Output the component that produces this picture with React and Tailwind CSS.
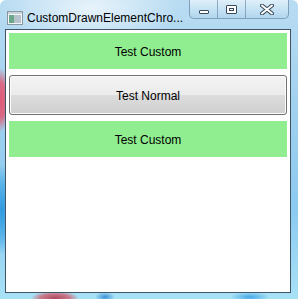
export default function App() {
  const font = { fontFamily: '"Segoe UI", "Liberation Sans", Arial, sans-serif' };
  return (
    <div
      className="w-[298px] h-[299px] overflow-hidden flex flex-col rounded-t-[6px] bg-[radial-gradient(ellipse_12px_32px_at_0px_100px,#e05a76_0%,#d86a86_55%,transparent_100%),radial-gradient(ellipse_12px_45px_at_2px_210px,#2f98e0_0%,#5ab4ea_60%,transparent_100%),radial-gradient(ellipse_24px_7px_at_55px_298px,#b04a60_0%,#c87a8c_60%,transparent_100%),radial-gradient(ellipse_10px_5px_at_105px_297px,#3b90d8_0%,transparent_100%),radial-gradient(ellipse_20px_5px_at_250px_297px,#46a8e6_0%,transparent_100%),radial-gradient(ellipse_90px_40px_at_90px_8px,#e8f3fb_0%,transparent_100%),linear-gradient(180deg,#b9dcf2_0%,#9fd0ee_40%,#8ccaf0_70%,#a8e2f6_100%)]"
      style={font}
    >
      {/* Title bar */}
      <div className="h-[29px] flex items-start shrink-0">
        <div className="flex items-center h-[20px] mt-[8px] ml-[7px]">
          <svg width="16" height="16" viewBox="0 0 16 16" className="shrink-0">
            <rect x="0.5" y="1.5" width="15" height="13" fill="#f4f6f8" stroke="#8a96a2" />
            <rect x="1" y="2" width="14" height="2" fill="#c9d3dc" />
            <rect x="2" y="5" width="5" height="8" fill="#6aa889" />
            <rect x="7" y="5" width="7" height="8" fill="#b7c3cc" />
          </svg>
          <span className="ml-[4px] text-[12px] text-black leading-none whitespace-nowrap">
            CustomDrawnElementChro...
          </span>
        </div>
        <div className="ml-auto mr-[9px] flex h-[19px] rounded-b-[5px] border border-t-0 border-[#5d7fa0]/70 bg-[linear-gradient(180deg,rgba(255,255,255,0.55)_0%,rgba(230,242,250,0.35)_50%,rgba(160,200,230,0.2)_100%)] overflow-hidden">
          <div className="w-[28px] flex items-center justify-center border-r border-[#5d7fa0]/60">
            <div className="w-[10px] h-[4px] bg-white border border-[#3a4a5a] rounded-[1px] mt-[5px]" />
          </div>
          <div className="w-[28px] flex items-center justify-center border-r border-[#5d7fa0]/60">
            <div className="w-[11px] h-[9px] bg-white border border-[#3a4a5a] rounded-[1px] flex items-center justify-center">
              <div className="w-[5px] h-[3px] border border-[#3a4a5a]" />
            </div>
          </div>
          <div className="w-[42px] flex items-center justify-center">
            <svg width="14" height="11" viewBox="0 0 14 11">
              <path d="M2 1.5 L12 9.5 M12 1.5 L2 9.5" stroke="#3a4a5a" strokeWidth="4" strokeLinecap="round" />
              <path d="M2 1.5 L12 9.5 M12 1.5 L2 9.5" stroke="#ffffff" strokeWidth="2" strokeLinecap="round" />
            </svg>
          </div>
        </div>
      </div>

      {/* Client area */}
      <div className="ml-[5px] mr-[7px] h-[264px] border border-[#3f5466] bg-white px-[3px] pt-[3px] flex flex-col gap-[6px]">
        <div className="h-[36px] pt-[2px] bg-[#90ee90] flex items-center justify-center text-[12px] text-black">
          Test Custom
        </div>
        <div className="h-[40px] pt-[2px] rounded-[3px] border border-[#707070] bg-[linear-gradient(180deg,#f3f3f3_0%,#ebebeb_50%,#dddddd_50%,#cfcfcf_100%)] flex items-center justify-center text-[12px] text-black shadow-[inset_0_0_0_1px_#fcfcfc]">
          Test Normal
        </div>
        <div className="h-[36px] pt-[2px] bg-[#90ee90] flex items-center justify-center text-[12px] text-black">
          Test Custom
        </div>
      </div>
    </div>
  );
}
